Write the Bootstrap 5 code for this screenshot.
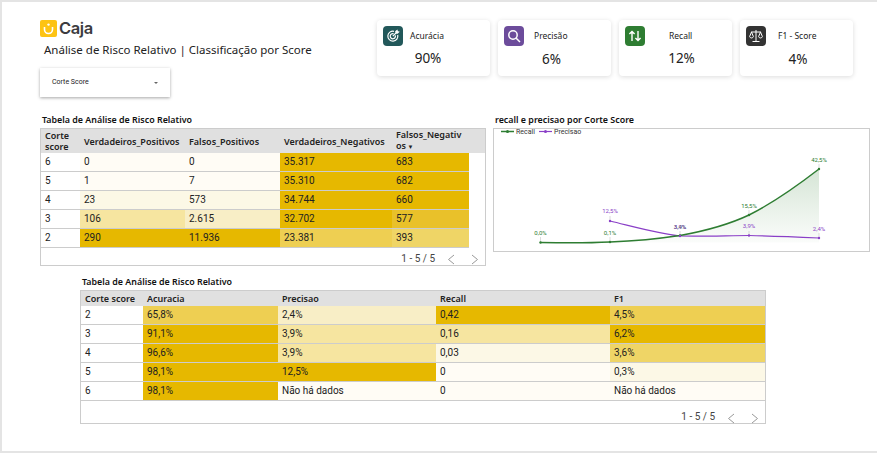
<!DOCTYPE html>
<html lang="pt">
<head>
  <meta charset="UTF-8" />
  <meta name="viewport" content="width=device-width, initial-scale=1.0" />
  <title>Análise de Risco Relativo</title>
  <link rel="stylesheet" href="https://cdn.jsdelivr.net/npm/bootstrap@5.3.0/dist/css/bootstrap.min.css" />
  <style>
    body { background: #fff; font-family: "Roboto", sans-serif; overflow: hidden; }
    .frame { height: 453px; border-top: 2px solid #e4e4e4; border-left: 2px solid #e4e4e4; border-bottom: 2px solid #e4e4e4; padding: 18px 7px 0 38px; }
    .top-row { height: 92px; }
    .brand { height: 17px; gap: 2px; }
    .brand-name { font: 600 16.5px/17px "Inter", sans-serif; color: #3c3c40; letter-spacing: -.4px; }
    .page-title { font: 400 11.5px/16px "Noto Sans", sans-serif; color: #222; margin: 5px 0 0 4px; }
    .filter-box { width: 130px; height: 29px; margin-top: 10px; padding: 0 12px; font-size: 7px; color: #222; box-shadow: 0 1px 3px rgba(0,0,0,.35); }
    .filter-arrow { width: 0; height: 0; border: 2px solid transparent; border-top: 2px solid #666; margin: 2px 0 0 0; }
    .kpi-row { gap: 8px; margin-right: 17px; }
    .kpi { width: 113px; height: 56px; border: 0; border-radius: 4px; padding: 6px; box-shadow: 0 1px 5px rgba(0,0,0,.14); font-family: "Noto Sans", sans-serif; }
    .kpi-head { height: 20px; font-size: 8.5px; color: #222; }
    .kpi-label-a { margin-left: 7px; }
    .kpi-label-b { margin: 1px 0 0 10px; }
    .kpi-label-c { margin-left: 24px; }
    .kpi-label-d { margin: 1px 0 0 12px; }
    .kpi-value { font-size: 13.5px; line-height: 18px; margin-top: 3px; color: #222; text-align: center; }
    .value-a { padding-right: 11px; }
    .value-b { padding-right: 6px; margin-top: 4px; }
    .value-c { padding-left: 12px; }
    .value-d { padding-left: 3px; margin-top: 4px; }
    .kpi-ico { width: 20px; height: 20px; border-radius: 4px; }
    .ico-teal { background: #22585a; }
    .ico-purple { background: #6c4c9b; }
    .ico-green { background: #2e7d32; }
    .ico-dark { background: #333; }
    .block-title { font: 600 8.9px/15px "Noto Sans", sans-serif; color: #111; padding: 0 0 1px 2px; }
    .panel-one { width: 446px; height: 138px; }
    .panel-two { width: 686px; height: 134px; }
    .panel-chart { width: 377px; height: 124px; }
    .framed { border: 1px solid #ccc; background: #fff; }
    .middle-row { gap: 7px; }
    .second-block { margin: 8px 0 0 40px; }
    .risk-table { table-layout: fixed; width: 100%; margin: 0; border-collapse: separate; border-spacing: 0; }
    .risk-table th { background: #e0e0e0; font: 600 9px/11px "Noto Sans", sans-serif; color: #222; padding: 0 4px; border: 0; vertical-align: middle; box-shadow: none; }
    .risk-table td { height: 19px; padding: 0 4px; font-size: 10px; line-height: 18px; color: #222; border: 0; border-bottom: 1px solid #ccc; vertical-align: middle; box-shadow: none; }
    .risk-table td.blank { border: 0; background: #fff; }
    .head-one tr { height: 24px; }
    .head-two tr { height: 15px; }
    .sorted::after { content: " ▼"; font-size: 6px; }
    .pager { font-size: 10px; color: #444; gap: 12px; padding-right: 6px; }
    .pager svg { margin-top: 3px; }
    .pager-one { height: 17px; padding-top: 3px; }
    .pager-two { height: 22px; padding-top: 9px; }
    .g0 { background: #fffcf5 !important; }
    .g1 { background: #fcf8e6 !important; }
    .g2 { background: #f8eec6 !important; }
    .g3 { background: #f6e5a0 !important; }
    .g4 { background: #efd566 !important; }
    .g5 { background: #eecf52 !important; }
    .g6 { background: #e9c12a !important; }
    .g7 { background: #e6b800 !important; }
    .chart-text { font: 6px "Roboto", sans-serif; }
    .t-green { fill: #2e7d32; }
    .t-purple { fill: #8a3fc7; }
    .t-legend { fill: #333; font-size: 7px; }
  </style>
</head>
<body>
  <div class="frame">
    <div class="d-flex justify-content-between top-row">
      <div>
        <div class="d-flex align-items-center brand">
          <svg width="17" height="17" viewBox="0 0 17 17"><rect width="17" height="17" rx="2" fill="#fdc313"/><path d="M4.500 7v2.500a4 4 0 0 0 8 0V7" fill="none" stroke="#fff" stroke-width="1.600"/><circle cx="8.500" cy="4.600" r="1.200" fill="#fff"/></svg>
          <span class="brand-name">Caja</span>
        </div>
        <div class="page-title">Análise de Risco Relativo | Classificação por Score</div>
        <div class="d-flex align-items-center justify-content-between bg-white filter-box">
          <span>Corte Score</span><span class="filter-arrow"></span>
        </div>
      </div>
      <div class="d-flex align-items-start kpi-row">
        <div class="card kpi">
          <div class="d-flex align-items-center kpi-head">
            <span class="d-flex align-items-center justify-content-center kpi-ico ico-teal">
              <svg width="16" height="16" viewBox="0 0 16 16" fill="none" stroke="#fff" stroke-width="1.200"><path d="M9 3.300A5 5 0 1 0 12.700 7"/><path d="M8.600 5.700A2.600 2.600 0 1 0 10.300 7.400"/><path d="M7.800 8.200 12 4M10.800 3.600l.2 1.400 1.400.2 1.200-1.200-1.200-.3-.3-1.200z"/></svg>
            </span>
            <span class="kpi-label-a">Acurácia</span>
          </div>
          <div class="kpi-value value-a">90%</div>
        </div>
        <div class="card kpi">
          <div class="d-flex align-items-center kpi-head">
            <span class="d-flex align-items-center justify-content-center kpi-ico ico-purple">
              <svg width="16" height="16" viewBox="0 0 16 16" fill="none" stroke="#fff" stroke-width="1.500"><circle cx="7" cy="7" r="4.200"/><path d="M10.200 10.200 14 14"/></svg>
            </span>
            <span class="kpi-label-b">Precisão</span>
          </div>
          <div class="kpi-value value-b">6%</div>
        </div>
        <div class="card kpi">
          <div class="d-flex align-items-center kpi-head">
            <span class="d-flex align-items-center justify-content-center kpi-ico ico-green">
              <svg width="16" height="16" viewBox="0 0 16 16" fill="none" stroke="#fff" stroke-width="1.400"><path d="M5 13V3.500M2.400 6 5 3.400 7.600 6M11 3v9.500M8.400 10l2.600 2.600 2.600-2.600"/></svg>
            </span>
            <span class="kpi-label-c">Recall</span>
          </div>
          <div class="kpi-value value-c">12%</div>
        </div>
        <div class="card kpi">
          <div class="d-flex align-items-center kpi-head">
            <span class="d-flex align-items-center justify-content-center kpi-ico ico-dark">
              <svg width="16" height="16" viewBox="0 0 16 16" fill="none" stroke="#fff"><path d="M8 2v11M4.500 13.500h7M3 4h10"/><path d="M3.500 4 1.600 8.600a2 2 0 0 0 3.800 0zM12.500 4l-1.900 4.600a2 2 0 0 0 3.800 0z"/></svg>
            </span>
            <span class="kpi-label-d">F1 - Score</span>
          </div>
          <div class="kpi-value value-d">4%</div>
        </div>
      </div>
    </div>

    <div class="d-flex align-items-start middle-row">
      <div>
        <div class="block-title">Tabela de Análise de Risco Relativo</div>
        <div class="framed panel-one">
          <table class="table risk-table">
            <colgroup><col style="width:39px"><col style="width:105px"><col style="width:95px"><col style="width:112px"><col style="width:77px"><col></colgroup>
            <thead class="head-one">
              <tr><th>Corte score</th><th>Verdadeiros_Positivos</th><th>Falsos_Positivos</th><th>Verdadeiros_Negativos</th><th class="text-break sorted">Falsos_Negativos</th><th></th></tr>
            </thead>
            <tbody>
              <tr><td>6</td><td class="g0">0</td><td class="g0">0</td><td class="g7">35.317</td><td class="g7">683</td><td class="blank"></td></tr>
              <tr><td>5</td><td class="g0">1</td><td class="g0">7</td><td class="g7">35.310</td><td class="g7">682</td><td class="blank"></td></tr>
              <tr><td>4</td><td class="g1">23</td><td class="g1">573</td><td class="g7">34.744</td><td class="g7">660</td><td class="blank"></td></tr>
              <tr><td>3</td><td class="g3">106</td><td class="g2">2.615</td><td class="g7">32.702</td><td class="g6">577</td><td class="blank"></td></tr>
              <tr><td>2</td><td class="g7">290</td><td class="g7">11.936</td><td class="g5">23.381</td><td class="g4">393</td><td class="blank"></td></tr>
            </tbody>
          </table>
          <div class="d-flex align-items-center justify-content-end pager pager-one">
            <span>1 - 5 / 5</span>
            <svg width="8" height="11" viewBox="0 0 8 11" fill="none" stroke="#999"><path d="M7 1 1.500 5.500 7 10"/></svg>
            <svg class="ms-1" width="8" height="11" viewBox="0 0 8 11" fill="none" stroke="#999"><path d="M1 1l5.500 4.500L1 10"/></svg>
          </div>
        </div>
      </div>

      <div>
        <div class="block-title">recall e precisao por Corte Score</div>
        <div class="framed panel-chart">
          <svg width="375" height="122" viewBox="494 129 375 122">
            <defs>
              <linearGradient id="area" x1="0" y1="0" x2="0" y2="1">
                <stop offset="0" stop-color="#2e7d32" stop-opacity=".2"/>
                <stop offset="1" stop-color="#2e7d32" stop-opacity=".02"/>
              </linearGradient>
            </defs>
            <path d="M540.500 242.500C565 243 590 243 610 242C635 241 660 238.500 680 235.500C705 231 730 224 749 215C775 202 797 186 819 169V242.500H680z" fill="url(#area)"/>
            <path d="M610 221C635 227 660 234 680 236C705 236.500 730 235.500 749 235.500C775 236 797 237 819 238" fill="none" stroke="#8a3fc7" stroke-width="1.200"/>
            <path d="M540.500 242.500C565 243 590 243 610 242C635 241 660 238.500 680 235.500C705 231 730 224 749 215C775 202 797 186 819 169" fill="none" stroke="#2e7d32" stroke-width="1.500"/>
            <g stroke="#ccc" stroke-width=".7">
              <path d="M540.500 237v5M610 237v5M610 216v5M680 231v5M749 210v5M749 231v5M819 164v5M819 233v5"/>
            </g>
            <g fill="#2e7d32">
              <circle cx="540.500" cy="242.500" r="1.200"/><circle cx="610" cy="242" r="1.200"/><circle cx="680" cy="235.500" r="1.200"/><circle cx="749" cy="215" r="1.200"/><circle cx="819" cy="169" r="1.200"/>
            </g>
            <g fill="#8a3fc7">
              <circle cx="610" cy="221" r="1.200"/><circle cx="680" cy="236" r="1.200"/><circle cx="749" cy="235.500" r="1.200"/><circle cx="819" cy="238" r="1.200"/>
            </g>
            <g class="chart-text t-green" text-anchor="middle">
              <text x="540.500" y="235">0,0%</text><text x="610" y="235">0,1%</text><text x="680" y="229">3,4%</text><text x="749" y="208">15,5%</text><text x="819" y="162">42,5%</text>
            </g>
            <g class="chart-text t-purple" text-anchor="middle">
              <text x="610" y="213">12,5%</text><text x="680" y="229">3,9%</text><text x="749" y="228">3,9%</text><text x="819" y="231">2,4%</text>
            </g>
            <path d="M501 131.500h13" stroke="#2e7d32" stroke-width="1.500"/><circle cx="507.500" cy="131.500" r="1.500" fill="#2e7d32"/>
            <text class="chart-text t-legend" x="516" y="134">Recall</text>
            <path d="M539 131.500h13" stroke="#8a3fc7" stroke-width="1.200"/><circle cx="545.500" cy="131.500" r="1.500" fill="#8a3fc7"/>
            <text class="chart-text t-legend" x="554" y="134">Precisao</text>
          </svg>
        </div>
      </div>
    </div>

    <div class="second-block">
      <div class="block-title">Tabela de Análise de Risco Relativo</div>
      <div class="framed panel-two">
        <table class="table risk-table">
          <colgroup><col style="width:62px"><col style="width:135px"><col style="width:158px"><col style="width:174px"><col></colgroup>
          <thead class="head-two">
            <tr><th>Corte score</th><th>Acuracia</th><th>Precisao</th><th>Recall</th><th>F1</th></tr>
          </thead>
          <tbody>
            <tr><td>2</td><td class="g5">65,8%</td><td class="g2">2,4%</td><td class="g7">0,42</td><td class="g5">4,5%</td></tr>
            <tr><td>3</td><td class="g7">91,1%</td><td class="g3">3,9%</td><td class="g3">0,16</td><td class="g7">6,2%</td></tr>
            <tr><td>4</td><td class="g7">96,6%</td><td class="g3">3,9%</td><td class="g1">0,03</td><td class="g4">3,6%</td></tr>
            <tr><td>5</td><td class="g7">98,1%</td><td class="g7">12,5%</td><td class="g0">0</td><td class="g1">0,3%</td></tr>
            <tr><td>6</td><td class="g7">98,1%</td><td class="g0">Não há dados</td><td class="g0">0</td><td class="g0">Não há dados</td></tr>
          </tbody>
        </table>
        <div class="d-flex align-items-center justify-content-end pager pager-two">
          <span>1 - 5 / 5</span>
          <svg width="8" height="11" viewBox="0 0 8 11" fill="none" stroke="#999"><path d="M7 1 1.500 5.500 7 10"/></svg>
          <svg class="ms-1" width="8" height="11" viewBox="0 0 8 11" fill="none" stroke="#999"><path d="M1 1l5.500 4.500L1 10"/></svg>
        </div>
      </div>
    </div>
  </div>
  <script src="https://cdn.jsdelivr.net/npm/bootstrap@5.3.0/dist/js/bootstrap.bundle.min.js"></script>
</body>
</html>
